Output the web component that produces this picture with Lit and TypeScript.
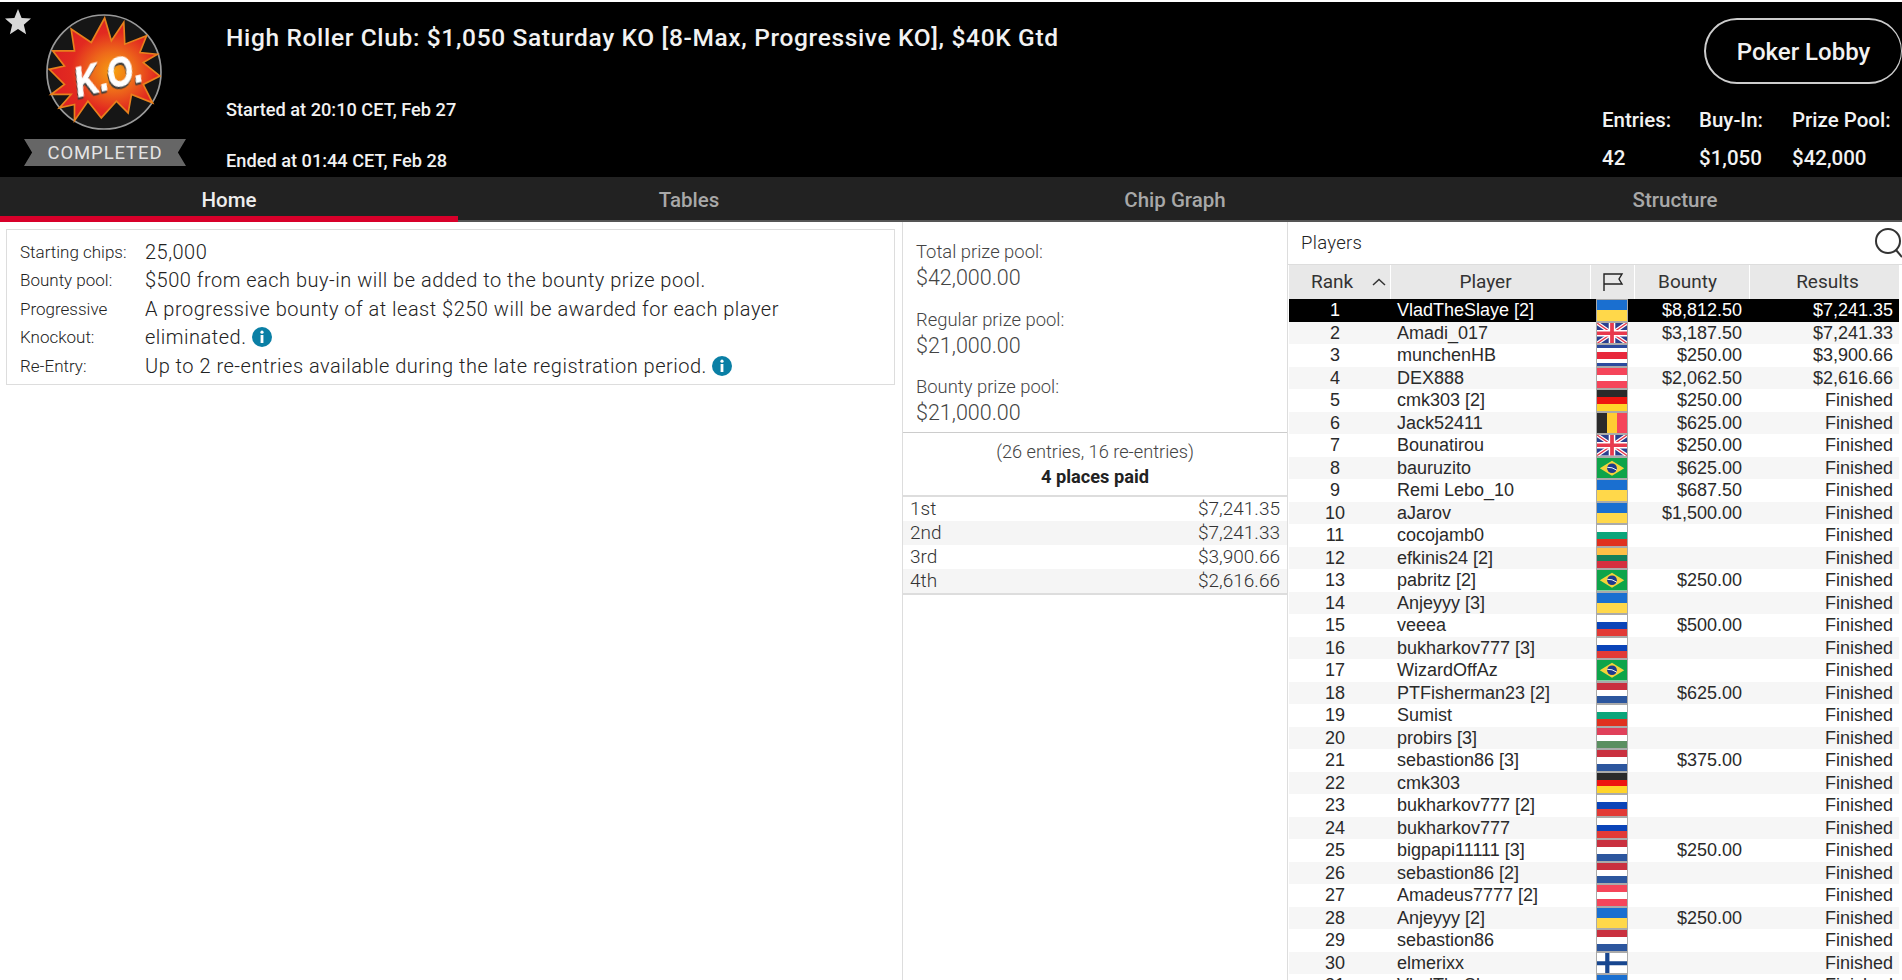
import { LitElement, html, css, svg } from "lit";
import { customElement } from "lit/decorators.js";

type Player = [string, string, string, string];

// name, flag, bounty, result
const PLAYERS: Player[] = [
  ["VladTheSlaye [2]", "ua", "$8,812.50", "$7,241.35"],
  ["Amadi_017", "gb", "$3,187.50", "$7,241.33"],
  ["munchenHB", "cr", "$250.00", "$3,900.66"],
  ["DEX888", "at", "$2,062.50", "$2,616.66"],
  ["cmk303 [2]", "de", "$250.00", "Finished"],
  ["Jack52411", "be", "$625.00", "Finished"],
  ["Bounatirou", "gb", "$250.00", "Finished"],
  ["bauruzito", "br", "$625.00", "Finished"],
  ["Remi Lebo_10", "ua", "$687.50", "Finished"],
  ["aJarov", "ua", "$1,500.00", "Finished"],
  ["cocojamb0", "bg", "", "Finished"],
  ["efkinis24 [2]", "lt", "", "Finished"],
  ["pabritz [2]", "br", "$250.00", "Finished"],
  ["Anjeyyy [3]", "ua", "", "Finished"],
  ["veeea", "ru", "$500.00", "Finished"],
  ["bukharkov777 [3]", "ru", "", "Finished"],
  ["WizardOffAz", "br", "", "Finished"],
  ["PTFisherman23 [2]", "nl", "$625.00", "Finished"],
  ["Sumist", "bg", "", "Finished"],
  ["probirs [3]", "hu", "", "Finished"],
  ["sebastion86 [3]", "nl", "$375.00", "Finished"],
  ["cmk303", "de", "", "Finished"],
  ["bukharkov777 [2]", "ru", "", "Finished"],
  ["bukharkov777", "ru", "", "Finished"],
  ["bigpapi11111 [3]", "nl", "$250.00", "Finished"],
  ["sebastion86 [2]", "nl", "", "Finished"],
  ["Amadeus7777 [2]", "at", "", "Finished"],
  ["Anjeyyy [2]", "ua", "$250.00", "Finished"],
  ["sebastion86", "nl", "", "Finished"],
  ["elmerixx", "fi", "", "Finished"],
  ["VladTheSlaye", "ua", "", "Finished"],
];

const PAYOUTS = [
  ["1st", "$7,241.35"],
  ["2nd", "$7,241.33"],
  ["3rd", "$3,900.66"],
  ["4th", "$2,616.66"],
];

const POOLS = [
  ["Total prize pool:", "$42,000.00"],
  ["Regular prize pool:", "$21,000.00"],
  ["Bounty prize pool:", "$21,000.00"],
];

const BURST =
  "315,52 335,120 372,65 375,130 440,105 420,155 472,160 430,185 480,225 430,250 458,305 395,280 385,335 350,300 305,350 265,300 225,358 225,310 180,320 215,280 155,280 195,250 150,205 195,195 160,150 225,150 215,85 275,125";

function flagArt(code: string) {
  if (code === "gb") {
    return html`<svg class="art" viewBox="0 0 32 22" preserveAspectRatio="none">
      <rect width="32" height="22" fill="#2a3f8f" />
      <path d="M0 0L32 22M32 0L0 22" stroke="#fff" stroke-width="4" />
      <path d="M0 0L32 22M32 0L0 22" stroke="#e8394d" stroke-width="1.5" />
      <path d="M16 0V22M0 11H32" stroke="#fff" stroke-width="7" />
      <path d="M16 0V22M0 11H32" stroke="#e8394d" stroke-width="4" />
    </svg>`;
  }
  if (code === "br") {
    return html`<svg class="art" viewBox="0 0 32 22" preserveAspectRatio="none">
      <rect width="32" height="22" fill="#0ea44a" />
      <path d="M16 3L29 11L16 19L3 11Z" fill="#f5d33a" />
      <circle cx="16" cy="11" r="5.2" fill="#1f3a8c" />
      <path d="M11 10Q16 9.5 21 13" stroke="#fff" stroke-width="1" fill="none" />
    </svg>`;
  }
  if (code === "fi") {
    return html`<svg class="art" viewBox="0 0 32 22" preserveAspectRatio="none">
      <rect width="32" height="22" fill="#fff" />
      <path d="M11 0V22M0 11H32" stroke="#17468f" stroke-width="4.5" />
    </svg>`;
  }
  return "";
}

@customElement("app-root")
export class AppRoot extends LitElement {
  static styles = css`
    :host {
      display: block;
      width: 1902px;
      height: 980px;
      overflow: hidden;
      background: #fff;
      font-family: Roboto, "Liberation Sans", sans-serif;
      color: #333;
    }
    .page {
      padding-top: 2px;
    }

    /* header */
    .header {
      position: relative;
      display: flex;
      height: 175px;
      background: #000;
      color: #f2f2f2;
    }
    .star {
      position: absolute;
      left: 5px;
      top: 7px;
      width: 26px;
      height: 26px;
      fill: #d8d8d8;
    }
    .brand {
      width: 226px;
      flex: none;
    }
    .ko {
      display: block;
      width: 116px;
      height: 116px;
      margin: 12px 0 0 46px;
    }
    .ko text {
      font-family: "Liberation Sans", sans-serif;
      font-weight: 700;
      font-style: italic;
      font-size: 125px;
      fill: #fff;
      stroke: #fff;
      stroke-width: 3px;
      filter: drop-shadow(-3px 6px 0 #3a3a3a);
    }
    .ribbon {
      width: 162px;
      height: 27px;
      margin: 9px 0 0 24px;
      background: #666;
      clip-path: polygon(0 0, 100% 0, 95% 50%, 100% 100%, 0 100%, 5% 50%);
      text-align: center;
      font-size: 18.5px;
      letter-spacing: 0.9px;
      line-height: 28px;
      color: #e4e4e4;
    }
    .titles {
      flex: 1;
      padding-top: 21px;
    }
    .title {
      font-size: 24.5px;
      letter-spacing: 0.65px;
      line-height: 30px;
      font-weight: 500;
    }
    .when {
      font-size: 18.2px;
      line-height: 24px;
      font-weight: 500;
    }
    .when.started {
      margin-top: 45px;
    }
    .when.ended {
      margin-top: 27px;
    }
    .side {
      width: 300px;
      flex: none;
      padding-top: 16px;
    }
    .lobby {
      box-sizing: border-box;
      width: 198px;
      height: 66px;
      margin-left: auto;
      border: 2px solid #ccc;
      border-right-width: 1px;
      border-radius: 33px;
      text-align: center;
      font-size: 24px;
      font-weight: 500;
      line-height: 64px;
    }
    .stats {
      display: grid;
      grid-template-columns: 97px 93px auto;
      margin-top: 18px;
      font-size: 20.5px;
      font-weight: 500;
      line-height: 37.5px;
    }

    /* tabs */
    .tabs {
      display: grid;
      grid-template-columns: 458px 462px 510px 472px;
      height: 45px;
      box-sizing: border-box;
      background: #222;
      border-bottom: 2px solid #555;
      font-size: 20.5px;
      font-weight: 500;
      color: #a8a8a8;
    }
    .tab {
      height: 45px;
      box-sizing: border-box;
      text-align: center;
      line-height: 46px;
    }
    .tab.last {
      padding-left: 18px;
    }
    .tab.active {
      border-bottom: 6px solid #d8002a;
      color: #eee;
      line-height: 47px;
    }

    /* body */
    .main {
      display: grid;
      grid-template-columns: 902px 386px 614px;
      height: 758px;
    }
    .info-col {
      padding: 7px 0 0 6px;
    }
    .info {
      box-sizing: border-box;
      width: 889px;
      height: 156px;
      margin: 0;
      padding: 8px 13px;
      border: 1px solid #ddd;
      display: grid;
      grid-template-columns: 125px 1fr;
      align-content: start;
      font-weight: 300;
      font-size: 20px;
      letter-spacing: 0.5px;
      line-height: 28.4px;
      color: #222;
    }
    .info dt {
      font-size: 17px;
      letter-spacing: 0;
    }
    .info dd {
      margin: 0;
    }
    .i {
      display: inline-block;
      width: 20px;
      height: 20px;
      vertical-align: -3px;
    }
    .prizes {
      border-left: 1px solid #ddd;
      border-right: 1px solid #ddd;
      font-size: 18.4px;
      font-weight: 300;
      color: #444;
    }
    .pools {
      padding: 17px 13px 6px;
      border-bottom: 1px solid #ccc;
      line-height: 26px;
    }
    .pool + .pool {
      margin-top: 15.6px;
    }
    .pool .amount {
      font-size: 21.5px;
    }
    .summary {
      padding: 6px 0;
      border-bottom: 2px solid #ddd;
      text-align: center;
      font-size: 18.2px;
      line-height: 25px;
    }
    .summary b {
      display: block;
      font-weight: 700;
      color: #222;
    }
    .payouts {
      border-bottom: 2px solid #ddd;
      font-size: 19px;
    }
    .payout {
      display: flex;
      justify-content: space-between;
      height: 24px;
      padding: 0 7px;
      line-height: 24px;
      color: #333;
    }
    .payout:nth-child(even) {
      background: #f5f5f5;
    }

    /* players */
    .players {
      padding-right: 3px;
    }
    .players-head {
      display: flex;
      justify-content: space-between;
      align-items: center;
      height: 43px;
      box-sizing: border-box;
      margin-right: -3px;
      padding-left: 13px;
      border-bottom: 1px solid #ddd;
      font-size: 18.5px;
      letter-spacing: 0.3px;
      font-weight: 300;
      color: #222;
    }
    .search {
      width: 28px;
      height: 30px;
      fill: none;
      stroke: #333;
      stroke-width: 2;
    }
    .cols {
      display: grid;
      grid-template-columns: 101px 200px 44px 115px 150px;
      margin-left: 1px;
    }
    .thead {
      height: 34px;
      background: #e8e8e8;
      font-size: 19px;
      font-weight: 400;
      line-height: 34px;
      text-align: center;
    }
    .thead > div + div {
      border-left: 1px solid #fff;
    }
    .thead .player-h {
      padding-right: 10px;
    }
    .thead .bounty-h {
      padding-right: 9px;
    }
    .thead .results-h {
      padding-left: 6px;
    }
    .rank-h {
      display: flex;
      justify-content: space-between;
      align-items: center;
      padding: 0 4px 0 22px;
    }
    .caret {
      width: 14px;
      height: 8px;
      fill: none;
      stroke: #333;
      stroke-width: 1.5;
    }
    .flag-h {
      width: 22px;
      height: 18px;
      fill: none;
      stroke: #222;
      stroke-width: 1.4;
      vertical-align: -3px;
    }
    .row {
      height: 22.5px;
      font-family: "Liberation Sans", Arial, sans-serif;
      font-size: 18px;
      line-height: 22.5px;
      color: #2a2a2a;
      white-space: nowrap;
    }
    .row:nth-child(even) {
      background: #f6f6f6;
    }
    .row.top {
      background: #000;
      color: #fff;
    }
    .rank {
      padding-right: 9px;
      text-align: center;
    }
    .name {
      padding-left: 7px;
    }
    .bounty {
      padding-right: 7px;
      text-align: right;
    }
    .result {
      padding-right: 6px;
      text-align: right;
    }
    .flag {
      box-sizing: border-box;
      position: relative;
      width: 32px;
      height: 22.5px;
      margin-left: 6px;
      border: 1px solid #aaa;
      overflow: hidden;
    }
    .art {
      display: block;
      width: 100%;
      height: 100%;
    }
    .ua { background: linear-gradient(#1a6fd0 50%, #ffd84a 50%); }
    .at { background: linear-gradient(#f5455a 33.3%, #fff 33.3% 66.6%, #f5455a 66.6%); }
    .de { background: linear-gradient(#2a2a2a 33.3%, #ee1510 33.3% 66.6%, #ffd42a 66.6%); }
    .bg { background: linear-gradient(#fff 33.3%, #0aa57a 33.3% 66.6%, #e0301e 66.6%); }
    .lt { background: linear-gradient(#ffbf47 33.3%, #14805a 33.3% 66.6%, #d5303f 66.6%); }
    .ru { background: linear-gradient(#fff 33.3%, #0a44b8 33.3% 66.6%, #e23a36 66.6%); }
    .nl { background: linear-gradient(#c9303f 33.3%, #fff 33.3% 66.6%, #2c569e 66.6%); }
    .hu { background: linear-gradient(#e0405a 33.3%, #fff 33.3% 66.6%, #5a8f60 66.6%); }
    .be { background: linear-gradient(90deg, #2a2a2a 33.3%, #ffcc33 33.3% 66.6%, #f5455a 66.6%); }
    .cr { background: linear-gradient(#2c4a9e 16%, #fff 16% 33%, #e8283c 33% 67%, #fff 67% 84%, #2c4a9e 84%); }
    .gb, .br, .fi { background: #fff; }
  `;

  private renderInfoIcon() {
    return html`<svg class="i" viewBox="0 0 20 20">
      <circle cx="10" cy="10" r="10" fill="#0a7fa5" />
      <circle cx="10" cy="5.2" r="1.6" fill="#fff" />
      <rect x="8.6" y="8" width="2.8" height="8" fill="#fff" />
    </svg>`;
  }

  private renderBadge() {
    return html`<svg class="ko" viewBox="140 40 346 346">
      <defs>
        <radialGradient id="burst" cx="0.58" cy="0.52" r="0.55">
          <stop offset="0" stop-color="#f7a00f" />
          <stop offset="0.35" stop-color="#ee6a1a" />
          <stop offset="0.7" stop-color="#e22a20" />
          <stop offset="1" stop-color="#dd2222" />
        </radialGradient>
      </defs>
      <circle cx="313" cy="213" r="170" fill="#161616" stroke="#9a9a9a" stroke-width="5" />
      <polygon points=${BURST} fill="url(#burst)" stroke="#e8801c" stroke-width="5" />
      ${svg`<text x="222" y="266" textLength="205" lengthAdjust="spacingAndGlyphs" transform="rotate(-14 320 220)">K.O.</text>`}
    </svg>`;
  }

  private renderHeader() {
    return html`<div class="header">
      <svg class="star" viewBox="0 0 26 26">
        <polygon points="13,0 16.6,9 26,9.6 18.8,15.8 21.1,25.2 13,20 4.9,25.2 7.2,15.8 0,9.6 9.4,9" />
      </svg>
      <div class="brand">
        ${this.renderBadge()}
        <div class="ribbon">COMPLETED</div>
      </div>
      <div class="titles">
        <div class="title">High Roller Club: $1,050 Saturday KO [8-Max, Progressive KO], $40K Gtd</div>
        <div class="when started">Started at 20:10 CET, Feb 27</div>
        <div class="when ended">Ended at 01:44 CET, Feb 28</div>
      </div>
      <div class="side">
        <div class="lobby">Poker Lobby</div>
        <div class="stats">
          <span>Entries:</span><span>Buy-In:</span><span>Prize Pool:</span>
          <span>42</span><span>$1,050</span><span>$42,000</span>
        </div>
      </div>
    </div>`;
  }

  private renderPlayers() {
    return html`<section class="players">
      <div class="players-head">
        <span>Players</span>
        <svg class="search" viewBox="0 0 28 30">
          <circle cx="14" cy="13" r="12" />
          <path d="M22 22L28 29" />
        </svg>
      </div>
      <div class="cols thead">
        <div class="rank-h"><span>Rank</span>
          <svg class="caret" viewBox="0 0 14 8"><path d="M1 7L7 1.5L13 7" /></svg>
        </div>
        <div class="player-h">Player</div>
        <div>
          <svg class="flag-h" viewBox="0 0 22 18"><path d="M2 18V1H20L17 6L20 11H2" /></svg>
        </div>
        <div class="bounty-h">Bounty</div>
        <div class="results-h">Results</div>
      </div>
      <div>
        ${PLAYERS.map(
          ([name, flag, bounty, result], i) => html`<div class="cols row ${i === 0 ? "top" : ""}">
            <div class="rank">${i + 1}</div>
            <div class="name">${name}</div>
            <div><div class="flag ${flag}">${flagArt(flag)}</div></div>
            <div class="bounty">${bounty}</div>
            <div class="result">${result}</div>
          </div>`
        )}
      </div>
    </section>`;
  }

  render() {
    return html`<div class="page">
      ${this.renderHeader()}
      <nav class="tabs">
        <div class="tab active">Home</div>
        <div class="tab">Tables</div>
        <div class="tab">Chip Graph</div>
        <div class="tab last">Structure</div>
      </nav>
      <main class="main">
        <div class="info-col">
          <dl class="info">
            <dt>Starting chips:</dt><dd>25,000</dd>
            <dt>Bounty pool:</dt><dd>$500 from each buy-in will be added to the bounty prize pool.</dd>
            <dt>Progressive Knockout:</dt>
            <dd>A progressive bounty of at least $250 will be awarded for each player<br />eliminated. ${this.renderInfoIcon()}</dd>
            <dt>Re-Entry:</dt>
            <dd>Up to 2 re-entries available during the late registration period. ${this.renderInfoIcon()}</dd>
          </dl>
        </div>
        <section class="prizes">
          <div class="pools">
            ${POOLS.map(
              ([label, amount]) => html`<div class="pool"><div>${label}</div><div class="amount">${amount}</div></div>`
            )}
          </div>
          <div class="summary">(26 entries, 16 re-entries)<b>4 places paid</b></div>
          <div class="payouts">
            ${PAYOUTS.map(([place, amount]) => html`<div class="payout"><span>${place}</span><span>${amount}</span></div>`)}
          </div>
        </section>
        ${this.renderPlayers()}
      </main>
    </div>`;
  }
}
